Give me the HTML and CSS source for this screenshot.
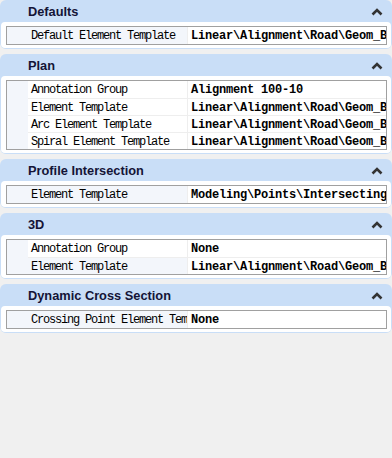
FILE: index.html
```html
<!DOCTYPE html>
<html lang="en">
<head>
    <meta charset="UTF-8">
    <title>Properties</title>
    <link rel="stylesheet" href="styles.css">
</head>
<body>
    <div class="panel">
        <div class="section">
            <div class="header"><span class="title">Defaults</span><svg class="chevron" width="12" height="8" viewBox="0 0 12 8"><polyline points="1.5,6.5 6,2 10.5,6.5"/></svg></div>
            <div class="body">
                <div class="grid">
                    <div class="row alt"><div class="gutter"></div><div class="label">Default Element Template</div><div class="value">Linear\Alignment\Road\Geom_Baseline</div></div>
                </div>
            </div>
        </div>
        <div class="section">
            <div class="header"><span class="title">Plan</span><svg class="chevron" width="12" height="8" viewBox="0 0 12 8"><polyline points="1.5,6.5 6,2 10.5,6.5"/></svg></div>
            <div class="body">
                <div class="grid">
                    <div class="row"><div class="gutter"></div><div class="label">Annotation Group</div><div class="value">Alignment 100-10</div></div>
                    <div class="row"><div class="gutter"></div><div class="label">Element Template</div><div class="value">Linear\Alignment\Road\Geom_Baseline</div></div>
                    <div class="row"><div class="gutter"></div><div class="label">Arc Element Template</div><div class="value">Linear\Alignment\Road\Geom_Baseline</div></div>
                    <div class="row"><div class="gutter"></div><div class="label">Spiral Element Template</div><div class="value">Linear\Alignment\Road\Geom_Baseline</div></div>
                </div>
            </div>
        </div>
        <div class="section">
            <div class="header"><span class="title">Profile Intersection</span><svg class="chevron" width="12" height="8" viewBox="0 0 12 8"><polyline points="1.5,6.5 6,2 10.5,6.5"/></svg></div>
            <div class="body">
                <div class="grid">
                    <div class="row alt"><div class="gutter"></div><div class="label">Element Template</div><div class="value">Modeling\Points\Intersecting Points</div></div>
                </div>
            </div>
        </div>
        <div class="section">
            <div class="header"><span class="title">3D</span><svg class="chevron" width="12" height="8" viewBox="0 0 12 8"><polyline points="1.5,6.5 6,2 10.5,6.5"/></svg></div>
            <div class="body">
                <div class="grid">
                    <div class="row"><div class="gutter"></div><div class="label">Annotation Group</div><div class="value">None</div></div>
                    <div class="row alt"><div class="gutter"></div><div class="label">Element Template</div><div class="value">Linear\Alignment\Road\Geom_Baseline</div></div>
                </div>
            </div>
        </div>
        <div class="section">
            <div class="header"><span class="title">Dynamic Cross Section</span><svg class="chevron" width="12" height="8" viewBox="0 0 12 8"><polyline points="1.5,6.5 6,2 10.5,6.5"/></svg></div>
            <div class="body">
                <div class="grid">
                    <div class="row alt"><div class="gutter"></div><div class="label">Crossing Point Element Template</div><div class="value">None</div></div>
                </div>
            </div>
        </div>
    </div>
</body>
</html>
```

FILE: styles.css
```css
body {
    margin: 0;
    background-color: #f0f0f0;
    width: 392px;
    height: 458px;
    overflow: hidden;
}
.panel {
    display: flex;
    flex-direction: column;
    gap: 5px;
}
.section {
    background-color: #c9def7;
    border-radius: 6px;
    padding: 0 1px 1px 1px;
}
.header {
    display: flex;
    align-items: center;
    justify-content: space-between;
    height: 22px;
    padding: 0 8px 0 27px;
}
.title {
    font-family: "Liberation Sans", Arial, sans-serif;
    font-weight: bold;
    font-size: 12.8px;
    color: #141436;
    padding-top: 1px;
}
.chevron {
    margin-top: 2px;
}
.chevron polyline {
    fill: none;
    stroke: #333333;
    stroke-width: 2.6;
}
.body {
    background-color: #ffffff;
    border-radius: 4px;
    padding: 4px 4px 3px 5px;
}
.grid {
    border: 1px solid #a0a0a0;
    display: flex;
    flex-direction: column;
}
.row {
    display: grid;
    grid-template-columns: 21px 159px 1fr;
    height: 17px;
    background-color: #ffffff;
}
.row + .row .label,
.row + .row .value {
    border-top: 1px solid #eeeeee;
}
.gutter {
    background-color: #f3f6fb;
}
.label, .value {
    white-space: nowrap;
    overflow: hidden;
    line-height: 16px;
    height: 17px;
    box-sizing: border-box;
}
.label {
    font-family: "Liberation Mono", "Courier New", monospace;
    font-size: 12px;
    letter-spacing: -1.2px;
    color: #000000;
    padding: 1px 0 0 3px;
}
.row.alt .label {
    background-color: #f3f6fb;
}
.value {
    font-family: "Liberation Mono", "Courier New", monospace;
    font-weight: bold;
    font-size: 12px;
    letter-spacing: -0.2px;
    color: #000000;
    border-left: 1px solid #eeeeee;
    padding: 1px 0 0 3px;
}
```
